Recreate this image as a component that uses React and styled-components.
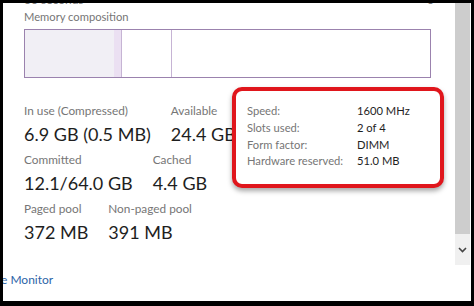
import React from "react";
import styled, { createGlobalStyle } from "styled-components";

const Global = createGlobalStyle`
  html, body { margin: 0; padding: 0; background: #000; }
  body { font-family: "Segoe UI", Lato, "Open Sans", sans-serif; }
`;

const Frame = styled.div`
  width: 474px;
  height: 306px;
  box-sizing: border-box;
  background: #000;
  padding: 3px 3px 5px 3px;
  overflow: hidden;
`;

const Window = styled.div`
  height: 100%;
  background: #fff;
  display: flex;
  flex-direction: column;
  overflow: hidden;
`;

const Body = styled.div`
  display: flex;
  height: 262px;
`;

const Content = styled.div`
  flex: 1;
  position: relative;
  padding-left: 21px;
  overflow: hidden;
`;

const Cut = styled.div`
  display: flex;
  justify-content: space-between;
  width: 410px;
  margin-top: -9px;
  height: 12px;
  font-size: 12px;
  line-height: 12px;
  color: #777;
`;

const Label = styled.div`
  font-size: 11.8px;
  line-height: 16px;
  color: #767676;
  white-space: nowrap;
`;

const Section = styled(Label)`
  margin-top: 3px;
  font-size: 11.2px;
`;

const Bar = styled.div`
  display: flex;
  width: 407px;
  height: 49px;
  margin-top: 4px;
  box-sizing: border-box;
  border: 1px solid #9b82ae;
`;

const Segment = styled.div`
  width: ${(p) => p.w}px;
  flex: ${(p) => (p.grow ? 1 : "none")};
  background: ${(p) => p.fill || "#fff"};
  border-right: ${(p) => (p.line ? "1px solid #c6b4d4" : "none")};
`;

const Stats = styled.div`
  display: flex;
  flex-direction: column;
  gap: 6px;
  margin-top: 25px;
`;

const StatRow = styled.div`
  display: flex;
  gap: 20px;
`;

const Value = styled.div`
  font-size: 18px;
  line-height: 24px;
  color: #1e1e1e;
  margin-top: 3px;
  white-space: nowrap;
`;

const Callout = styled.div`
  position: absolute;
  left: 229px;
  top: 84px;
  width: 212px;
  height: 101px;
  box-sizing: border-box;
  border: 4px solid #e0161c;
  border-radius: 10px;
  background: #fff;
  box-shadow: 0 3px 5px rgba(0, 0, 0, 0.35);
  padding: 12px 0 0 11px;
  display: grid;
  grid-template-columns: 110px auto;
  grid-auto-rows: 16.8px;
  align-content: start;
`;

const Key = styled.div`
  font-size: 11.2px;
  line-height: 16px;
  color: #767676;
  white-space: nowrap;
`;

const Val = styled(Key)`
  color: #1e1e1e;
`;

const Scrollbar = styled.div`
  width: 15px;
  margin-right: 1px;
  display: flex;
  flex-direction: column;
  background: #cdcdcd;
`;

const Thumb = styled.div`
  flex: 1;
  background: #cdcdcd;
`;

const Arrow = styled.div`
  height: 31px;
  background: #f0f0f0;
  display: flex;
  align-items: center;
  justify-content: center;
`;

const Footer = styled.div`
  flex: 1;
  padding-top: 7px;
`;

const Link = styled.div`
  font-size: 12px;
  line-height: 16px;
  color: #2d64a8;
  margin-left: -2px;
`;

const stats = [
  [
    ["In use (Compressed)", "6.9 GB (0.5 MB)"],
    ["Available", "24.4 GB"],
  ],
  [
    ["Committed", "12.1/64.0 GB"],
    ["Cached", "4.4 GB"],
  ],
  [
    ["Paged pool", "372 MB"],
    ["Non-paged pool", "391 MB"],
  ],
];

const hardware = [
  ["Speed:", "1600 MHz"],
  ["Slots used:", "2 of 4"],
  ["Form factor:", "DIMM"],
  ["Hardware reserved:", "51.0 MB"],
];

export default function App() {
  return (
    <Frame>
      <Global />
      <Window>
        <Body>
          <Content>
            <Cut>
              <span>60 seconds</span>
              <span>0</span>
            </Cut>
            <Section>Memory composition</Section>
            <Bar>
              <Segment w={89} fill="#f1eff5" />
              <Segment w={7} fill="#ebe0f2" line />
              <Segment w={49} line />
              <Segment grow />
            </Bar>
            <Stats>
              {stats.map((row, i) => (
                <StatRow key={i}>
                  {row.map(([k, v]) => (
                    <div key={k}>
                      <Label>{k}</Label>
                      <Value>{v}</Value>
                    </div>
                  ))}
                </StatRow>
              ))}
            </Stats>
            <Callout>
              {hardware.map(([k, v]) => (
                <React.Fragment key={k}>
                  <Key>{k}</Key>
                  <Val>{v}</Val>
                </React.Fragment>
              ))}
            </Callout>
          </Content>
          <Scrollbar>
            <Thumb />
            <Arrow>
              <svg width="9" height="6" viewBox="0 0 9 6">
                <path d="M1 1l3.5 3.5L8 1" fill="none" stroke="#444" strokeWidth="1.6" />
              </svg>
            </Arrow>
          </Scrollbar>
        </Body>
        <Footer>
          <Link>e Monitor</Link>
        </Footer>
      </Window>
    </Frame>
  );
}
